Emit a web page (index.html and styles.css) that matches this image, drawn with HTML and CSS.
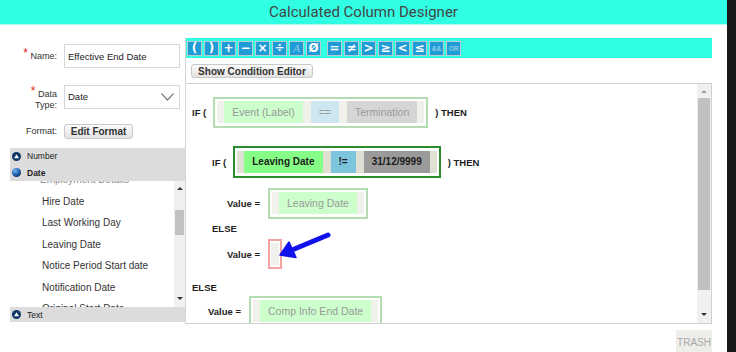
FILE: index.html
```html
<!DOCTYPE html>
<html lang="en">
	<head>
		<meta charset="UTF-8" />
		<meta name="viewport" content="width=device-width, initial-scale=1.0" />
		<link rel="stylesheet" href="styles.css">
		<title>Calculated Column Designer</title>
	</head>
	<body>
		<div class="dialog">
			<div class="header">Calculated Column Designer</div>
			<div class="main">
				<div class="left">
					<div class="field field-name">
						<label class="label"><span class="req">*</span> Name:</label>
						<div class="input">Effective End Date</div>
					</div>
					<div class="field field-type">
						<label class="label"><span class="req">*</span> Data<br />Type:</label>
						<div class="input select">
							Date
							<svg class="chevron" width="13" height="8" viewBox="0 0 13 8">
								<polyline points="0.5,0.5 6.5,7 12.5,0.5" fill="none" stroke="#555" stroke-width="1.1" />
							</svg>
						</div>
					</div>
					<div class="field field-format">
						<label class="label">Format:</label>
						<button class="btn btn-format">Edit Format</button>
					</div>
					<div class="types">
						<div class="type-row type-first">
							<svg class="type-icon" width="9" height="9" viewBox="0 0 9 9">
								<circle cx="4.5" cy="4.5" r="4.5" fill="#0d3568" />
								<polygon points="4.5,2.2 7,6.3 2,6.3" fill="#fff" />
							</svg>
							Number
						</div>
						<div class="type-row type-active">
							<svg class="type-icon" width="9" height="9" viewBox="0 0 9 9">
								<defs>
									<radialGradient id="ball" cx="0.35" cy="0.3" r="0.75">
										<stop offset="0" stop-color="#7fb6ef" />
										<stop offset="0.5" stop-color="#2a6fc0" />
										<stop offset="1" stop-color="#0b2f66" />
									</radialGradient>
								</defs>
								<circle cx="4.5" cy="4.5" r="4.5" fill="url(#ball)" />
							</svg>
							Date
						</div>
						<div class="tree">
							<div class="tree-list">
								<div class="tree-inner">
									<div class="tree-group"><span class="bullet">•</span>Employment Details</div>
									<div class="tree-item">Hire Date</div>
									<div class="tree-item">Last Working Day</div>
									<div class="tree-item">Leaving Date</div>
									<div class="tree-item">Notice Period Start date</div>
									<div class="tree-item">Notification Date</div>
									<div class="tree-item">Original Start Date</div>
								</div>
							</div>
							<div class="vscroll vscroll-small">
								<div class="sb-up"><span class="tri-up"></span></div>
								<div class="sb-thumb"></div>
								<div class="sb-space"></div>
								<div class="sb-down"><span class="tri-down"></span></div>
							</div>
						</div>
						<div class="type-row type-last">
							<svg class="type-icon" width="9" height="9" viewBox="0 0 9 9">
								<circle cx="4.5" cy="4.5" r="4.5" fill="#0d3568" />
								<polygon points="4.5,2.2 7,6.3 2,6.3" fill="#fff" />
							</svg>
							Text
						</div>
					</div>
				</div>

				<div class="right">
					<div class="panel">
						<div class="toolbar">
							<span class="op">(</span>
							<span class="op">)</span>
							<span class="op">+</span>
							<span class="op">−</span>
							<span class="op">×</span>
							<span class="op">÷</span>
							<span class="op op-dim op-italic">A</span>
							<span class="op">Ø</span>
							<span class="op op-gap">=</span>
							<span class="op">≠</span>
							<span class="op">&gt;</span>
							<span class="op">≥</span>
							<span class="op">&lt;</span>
							<span class="op">≤</span>
							<span class="op op-dim op-small">&amp;&amp;</span>
							<span class="op op-dim op-small">OR</span>
						</div>
						<div class="editor-bar">
							<button class="btn btn-editor">Show Condition Editor</button>
						</div>
						<div class="canvas">
							<div class="rules">
								<div class="row r1">
									<span class="kw">IF (</span>
									<div class="expr">
										<div class="expr-in">
											<span class="chip c-field">Event (Label)</span>
											<span class="chip c-op">==</span>
											<span class="chip c-val">Termination</span>
										</div>
									</div>
									<span class="kw">) THEN</span>
								</div>
								<div class="row r2">
									<span class="kw">IF (</span>
									<div class="expr expr-active">
										<div class="expr-in">
											<span class="chip on c-field-on">Leaving Date</span>
											<span class="chip on c-op-on">!=</span>
											<span class="chip on c-val-on">31/12/9999</span>
										</div>
									</div>
									<span class="kw">) THEN</span>
								</div>
								<div class="row row-val r3">
									<span class="kw">Value =</span>
									<div class="expr">
										<div class="expr-in">
											<span class="chip c-field">Leaving Date</span>
										</div>
									</div>
								</div>
								<div class="row r4"><span class="kw">ELSE</span></div>
								<div class="row row-val r5">
									<span class="kw">Value =</span>
									<div class="expr expr-empty">
										<div class="expr-in"></div>
									</div>
								</div>
								<div class="row r6"><span class="kw">ELSE</span></div>
								<div class="row row-val r7">
									<span class="kw">Value =</span>
									<div class="expr">
										<div class="expr-in">
											<span class="chip c-field">Comp Info End Date</span>
										</div>
									</div>
								</div>
							</div>
							<div class="vscroll vscroll-big">
								<div class="sb-up"><span class="tri-up"></span></div>
								<div class="sb-thumb"></div>
								<div class="sb-space"></div>
								<div class="sb-down"><span class="tri-down"></span></div>
							</div>
						</div>
					</div>
					<div class="footer">
						<button class="trash">TRASH</button>
					</div>
				</div>
			</div>

			<!-- annotation drawn over the editor -->
			<svg class="pointer" width="64" height="38" viewBox="0 0 64 38">
				<line x1="58" y1="9" x2="22" y2="24" stroke="#1212ee" stroke-width="5" stroke-linecap="round" />
				<polygon points="10,29 19,16 26,31.5" fill="#1212ee" stroke="#1212ee" stroke-width="1.5" stroke-linejoin="round" />
			</svg>
		</div>
	</body>
</html>
```

FILE: styles.css
```css
* {
	margin: 0;
	padding: 0;
	box-sizing: border-box;
}
body {
	width: 736px;
	height: 352px;
	overflow: hidden;
	background-color: #181818;
	font-family: "Liberation Sans", Arial, sans-serif;
	color: #333;
}
.dialog {
	position: relative;
	width: 727px;
	height: 352px;
	background-color: #fff;
	overflow: hidden;
}
.header {
	height: 25px;
	background-color: #30ffe4;
	border-bottom: 1px solid #a6fff1;
	display: flex;
	align-items: center;
	justify-content: center;
	font-family: Roboto, sans-serif;
	font-size: 15px;
	color: #444;
}
.main {
	display: flex;
}

/* left column */
.left {
	width: 185px;
	display: flex;
	flex-direction: column;
}
.field {
	display: grid;
	grid-template-columns: 57px 116px;
	column-gap: 7px;
	align-items: center;
}
.field-name {
	margin-top: 19px;
	height: 24px;
}
.field-type {
	margin-top: 14px;
	height: 24px;
}
.field-format {
	margin-top: 18px;
	height: 15px;
}
.label {
	text-align: right;
	font-size: 9px;
	line-height: 11px;
	color: #333;
}
.field-type .label {
	padding-top: 7px;
}
.req {
	color: #e4231b;
	font-size: 12px;
	line-height: 0;
	vertical-align: 2px;
}
.input {
	height: 24px;
	border: 1px solid #d6d6d6;
	padding-left: 3px;
	display: flex;
	align-items: center;
	font-size: 9.5px;
	color: #222;
	background-color: #fff;
}
.chevron {
	margin-left: auto;
	margin-right: 5px;
}
.btn {
	border: 1px solid #c9c9c9;
	border-radius: 3px;
	background: linear-gradient(#fbfbfb, #e2e2e2);
	font-family: "Liberation Sans", Arial, sans-serif;
	font-weight: bold;
	font-size: 10px;
	color: #333;
}
.btn-format {
	width: 69px;
	height: 15px;
}
.types {
	margin-top: 9px;
	margin-left: 10px;
	display: flex;
	flex-direction: column;
}
.type-row {
	height: 16px;
	background-color: #dcdcdc;
	display: flex;
	align-items: center;
	gap: 6px;
	padding-left: 2px;
	font-size: 8.5px;
	color: #222;
}
.type-active {
	height: 17px;
	font-weight: bold;
}
.type-last {
	height: 15px;
}
.tree {
	height: 126px;
	display: flex;
}
.tree-list {
	flex: 1;
	overflow: hidden;
}
.tree-inner {
	margin-top: -12px;
}
.tree-group,
.tree-item {
	height: 21.5px;
	line-height: 21.5px;
	font-size: 10px;
	white-space: nowrap;
}
.tree-group {
	padding-left: 12px;
	color: #8a8a8a;
}
.bullet {
	display: inline-block;
	width: 18px;
}
.tree-item {
	padding-left: 32px;
	color: #333;
}

/* scrollbars */
.vscroll {
	display: flex;
	flex-direction: column;
	background-color: #f0f0f0;
}
.vscroll-small {
	width: 11px;
}
.vscroll-big {
	width: 14px;
}
.sb-up,
.sb-down {
	display: flex;
	align-items: center;
	justify-content: center;
}
.sb-thumb {
	background-color: #c1c1c1;
	margin: 0 1px;
}
.sb-space {
	flex: 1;
}
.vscroll-small .sb-up {
	height: 15px;
}
.vscroll-small .sb-thumb {
	margin-top: 14px;
	height: 25px;
}
.vscroll-small .sb-down {
	height: 17px;
}
.vscroll-big .sb-up {
	height: 14px;
}
.vscroll-big .sb-thumb {
	height: 192px;
}
.vscroll-big .sb-down {
	height: 17px;
}
.tri-up {
	border-left: 3px solid transparent;
	border-right: 3px solid transparent;
	border-bottom: 3px solid #333;
}
.vscroll-big .tri-up {
	border-bottom-color: #a0a0a0;
}
.tri-down {
	border-left: 3px solid transparent;
	border-right: 3px solid transparent;
	border-top: 3px solid #333;
}

/* right column */
.right {
	margin-top: 13px;
	width: 527px;
	display: flex;
	flex-direction: column;
}
.panel {
	border-left: 1px solid #d6d6d6;
}
.toolbar {
	height: 20px;
	background-color: #30ffe4;
	display: flex;
	align-items: center;
	gap: 2px;
	padding-left: 1px;
}
.op {
	width: 15px;
	height: 15px;
	background-color: #1f9bd6;
	border: 1px solid #b9cbd2;
	color: #fff;
	font-family: "DejaVu Sans", sans-serif;
	font-weight: bold;
	font-size: 12px;
	display: flex;
	align-items: center;
	justify-content: center;
}
.op-gap {
	margin-left: 4px;
}
.op-dim {
	color: #8fcbe9;
}
.op-italic {
	font-family: "Liberation Serif", serif;
	font-style: italic;
	font-weight: normal;
	font-size: 11px;
}
.op-small {
	font-family: "Liberation Sans", Arial, sans-serif;
	font-size: 6.5px;
}
.editor-bar {
	padding-top: 6px;
	padding-left: 5px;
	display: flex;
}
.btn-editor {
	width: 122px;
	height: 14px;
}
.canvas {
	margin-top: 5px;
	height: 241px;
	border-top: 1px solid #d0d0d0;
	border-right: 1px solid #d0d0d0;
	border-bottom: 1px solid #d0d0d0;
	display: flex;
}
.rules {
	flex: 1;
	overflow: hidden;
	padding-left: 6px;
	display: flex;
	flex-direction: column;
}
.row {
	display: flex;
	align-items: center;
	gap: 7px;
	white-space: nowrap;
}
.row-val {
	gap: 8px;
}
.kw {
	font-weight: bold;
	font-size: 9.5px;
	color: #1e1e1e;
}
.r1 {
	margin-top: 13px;
}
.r2 {
	margin-top: 18px;
	margin-left: 20px;
}
.r3 {
	margin-top: 10px;
	margin-left: 35px;
}
.r4 {
	margin-top: 4px;
	margin-left: 20px;
	height: 14px;
}
.r5 {
	margin-top: 5px;
	margin-left: 35px;
}
.r6 {
	margin-top: 13px;
	height: 14px;
}
.r7 {
	margin-top: 3px;
	margin-left: 16px;
}
.expr {
	border: 2px solid #b3dcb3;
	padding: 2px 2px 3px;
	background-color: #fff;
}
.expr-active {
	border-color: #2a8c2a;
	padding: 3px 2px;
}
.expr-empty {
	border-color: #f3a3a3;
	padding: 2px 1px;
}
.expr-in {
	display: flex;
	gap: 8px;
	padding: 0 7px;
	background-color: #f1f1ec;
	min-height: 22px;
}
.expr-active .expr-in {
	background-color: #dfdfd4;
}
.expr-empty .expr-in {
	width: 8px;
	padding: 0;
}
.chip {
	height: 22px;
	line-height: 22px;
	padding: 0 8px;
	font-size: 10.5px;
	color: #9a9a9a;
}
.chip.on {
	font-size: 10px;
	font-weight: bold;
	color: #1c1c1c;
}
.c-field {
	background-color: #ccffcc;
}
.c-op {
	background-color: #cde8f1;
}
.c-val {
	background-color: #d5d5d5;
}
.c-field-on {
	background-color: #86ff86;
}
.c-op-on {
	background-color: #7cc5dc;
}
.c-val-on {
	background-color: #9a9a9a;
}
.footer {
	margin-top: 6px;
	display: flex;
	justify-content: flex-end;
}
.trash {
	width: 36px;
	height: 24px;
	border: none;
	background-color: #ededea;
	font-family: "Liberation Sans", Arial, sans-serif;
	font-size: 10px;
	color: #a8a8a8;
}
.pointer {
	position: absolute;
	left: 270px;
	top: 226px;
}
```
